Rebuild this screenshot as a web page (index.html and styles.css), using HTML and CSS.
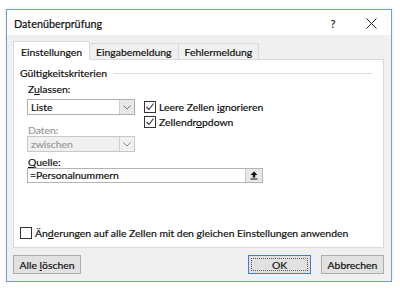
FILE: index.html
```html
<!DOCTYPE html>
<html lang="de">
<head>
<meta charset="utf-8">
<title>Datenüberprüfung</title>
<link rel="stylesheet" href="styles.css">
</head>
<body>
<div class="dialog">
  <div class="titlebar">
    <span class="title">Datenüberprüfung</span>
    <span class="help">?</span>
    <span class="close">
      <svg width="11" height="11" viewBox="0 0 11 11"><path d="M0.5 0.5 L10.5 10.5 M10.5 0.5 L0.5 10.5" stroke="#222" stroke-width="1" fill="none"/></svg>
    </span>
  </div>
  <div class="body">
    <div class="tabs">
      <div class="tab active">Einstellungen</div>
      <div class="tab">Eingabemeldung</div>
      <div class="tab">Fehlermeldung</div>
    </div>
    <div class="panel">
      <div class="group-head">
        <span class="legend">Gültigkeitskriterien</span>
        <span class="rule"></span>
      </div>
      <div class="criteria">
        <div class="left-col">
          <div class="label first">Z<u>u</u>lassen:</div>
          <div class="select first">
            <span class="value">Liste</span>
            <span class="arrow"><svg width="8" height="5" viewBox="0 0 8 5"><path d="M0.5 0.5 L4 4 L7.5 0.5" stroke="#777" fill="none"/></svg></span>
          </div>
          <div class="label disabled second">Daten:</div>
          <div class="select disabled">
            <span class="value">zwischen</span>
            <span class="arrow"><svg width="8" height="5" viewBox="0 0 8 5"><path d="M0.5 0.5 L4 4 L7.5 0.5" stroke="#888" fill="none"/></svg></span>
          </div>
        </div>
        <div class="right-col">
          <label class="check">
            <span class="box"><svg width="10" height="10" viewBox="0 0 10 10"><path d="M1.5 5 L4 7.5 L8.5 1.5" stroke="#333" stroke-width="1.1" fill="none"/></svg></span>
            <span>Leere Zellen <u>i</u>gnorieren</span>
          </label>
          <label class="check">
            <span class="box"><svg width="10" height="10" viewBox="0 0 10 10"><path d="M1.5 5 L4 7.5 L8.5 1.5" stroke="#333" stroke-width="1.1" fill="none"/></svg></span>
            <span>Zellendr<u>o</u>pdown</span>
          </label>
        </div>
      </div>
      <div class="label src-label"><u>Q</u>uelle:</div>
      <div class="source">
        <span class="value">=Personalnummern</span>
        <span class="pick"><svg width="8" height="9" viewBox="0 0 8 9"><path d="M4 0.5 L7.5 4 L5.2 4 L5.2 6.5 L2.8 6.5 L2.8 4 L0.5 4 Z" fill="#111"/><rect x="0.5" y="7.5" width="7" height="1" fill="#111"/></svg></span>
      </div>
      <div class="spacer"></div>
      <label class="check all">
        <span class="box"></span>
        <span>Än<u>d</u>erungen auf alle Zellen mit den gleichen Einstellungen anwenden</span>
      </label>
    </div>
    <div class="buttons">
      <button class="btn wide">Alle <u>l</u>öschen</button>
      <div class="fill"></div>
      <button class="btn default">OK</button>
      <button class="btn">Abbrechen</button>
    </div>
  </div>
</div>
</body>
</html>
```
FILE: styles.css
```css
* { box-sizing: border-box; }
html, body { margin: 0; padding: 0; background: #ffffff; }
body {
  font-family: "Lato", "Noto Sans", sans-serif;
  font-size: 10.4px;
  color: #111111;
  -webkit-text-stroke: 0.2px currentColor;
}
u { text-decoration: underline; text-underline-offset: 1px; }
.dialog {
  margin: 9px 0 0 6px;
  width: 386px;
  height: 273px;
  border: 1px solid #6e9fd6;
  background: #f0f0f0;
  display: flex;
  flex-direction: column;
  box-shadow: 0 0 3px rgba(0,0,0,0.12);
}
.titlebar {
  height: 25px;
  background: #ffffff;
  display: flex;
  align-items: center;
  padding: 1px 0 0 7px;
}
.title { font-size: 10.8px; color: #111; flex: 1; }
.help { width: 20px; text-align: center; font-size: 11px; margin-right: 18px; color: #222; }
.close { width: 20px; display: flex; justify-content: center; margin-right: 10px; }
.body {
  flex: 1;
  padding: 6px 7px 0 6px;
  display: flex;
  flex-direction: column;
}
.tabs {
  display: flex;
  align-items: flex-end;
  height: 19px;
  margin-bottom: -1px;
  position: relative;
  z-index: 1;
}
.tab {
  height: 17px;
  padding: 0 6px;
  display: flex;
  align-items: center;
  border: 1px solid #d9d9d9;
  border-left: none;
  background: #f0f0f0;
}
.tab.active {
  height: 19px;
  background: #ffffff;
  border-left: 1px solid #d9d9d9;
  border-bottom-color: #ffffff;
  padding: 2px 7px 0 7px;
}
.panel {
  height: 189px;
  background: #ffffff;
  border: 1px solid #d9d9d9;
  padding: 5px 6px 7px 6px;
  display: flex;
  flex-direction: column;
}
.group-head {
  display: flex;
  align-items: center;
  height: 16px;
}
.legend { margin-right: 6px; }
.rule { flex: 1; height: 1px; background: #dcdcdc; margin-right: 5px; }
.criteria { display: flex; padding-left: 7px; }
.left-col { width: 108px; display: flex; flex-direction: column; }
.right-col { padding-left: 9px; padding-top: 20px; display: flex; flex-direction: column; gap: 3px; }
.label { height: 11px; line-height: 11px; padding-left: 1px; }
.label.first { margin-top: 3px; }
.label.second { margin-top: 10px; }
.label.disabled { color: #9a9a9a; }
.src-label { margin-left: 7px; margin-top: 5px; }
.select {
  height: 16px;
  border: 1px solid #adadad;
  background: #ffffff;
  display: flex;
  align-items: stretch;
}
.select.first { margin-top: 4px; }
.select .value { flex: 1; padding-left: 3px; line-height: 14px; }
.select .arrow {
  width: 15px;
  background: #e8e8e8;
  border-left: 1px solid #d0d0d0;
  display: flex;
  align-items: center;
  justify-content: center;
}
.select.disabled { background: #f0f0f0; border-color: #c8c8c8; color: #9a9a9a; }
.select.disabled .arrow { background: #f0f0f0; }
.check { display: flex; align-items: center; height: 12px; }
.box {
  width: 12px;
  height: 12px;
  border: 1px solid #333;
  background: #fff;
  margin-right: 3px;
  display: flex;
  align-items: center;
  justify-content: center;
}
.source {
  margin-left: 7px;
  width: 236px;
  height: 15px;
  border: 1px solid #b4b4b4;
  display: flex;
}
.source .value { flex: 1; padding-left: 2px; line-height: 13px; }
.source .pick {
  width: 17px;
  background: #e8e8e8;
  border-left: 1px solid #c8c8c8;
  display: flex;
  align-items: center;
  justify-content: center;
}
.spacer { flex: 1; }
.check.all { height: 14px; white-space: nowrap; }
.buttons {
  display: flex;
  padding-top: 7px;
  gap: 10px;
}
.fill { flex: 1; }
.btn {
  font: inherit;
  color: #111111;
  -webkit-text-stroke: 0.2px currentColor;
  height: 19px;
  padding: 0;
  border: 1px solid #adadad;
  background: #e1e1e1;
  width: 63px;
}
.btn.wide { width: 68px; }
.btn.default { border: 1px solid #3c7fd1; outline: 1px dotted #555; outline-offset: -4px; }
```
